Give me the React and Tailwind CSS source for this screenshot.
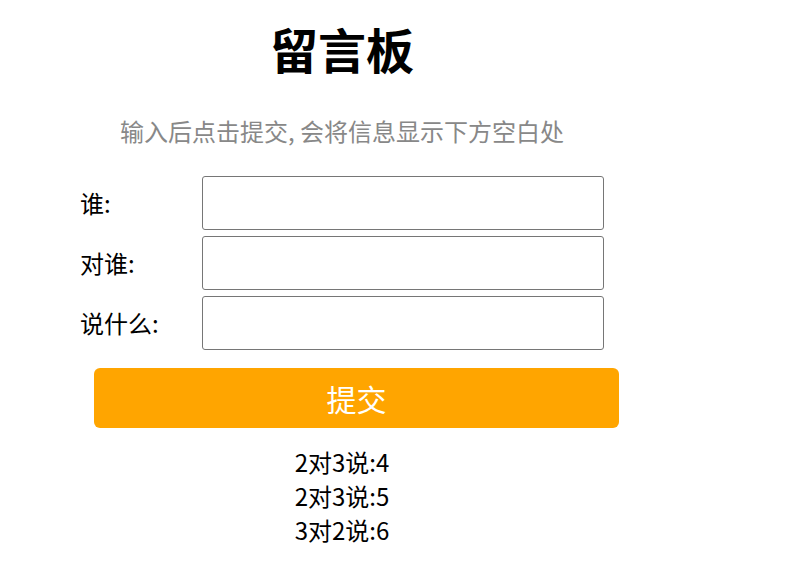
import { useState } from 'react';

const font = { fontFamily: '"Noto Sans CJK SC", "Noto Sans", sans-serif' };

export default function App() {
    const [from, setFrom] = useState('');
    const [to, setTo] = useState('');
    const [text, setText] = useState('');
    const [messages, setMessages] = useState([
        { from: '2', to: '3', text: '4' },
        { from: '2', to: '3', text: '5' },
        { from: '3', to: '2', text: '6' },
    ]);

    const handleSubmit = () => {
        if (!from || !to || !text) return;
        setMessages([...messages, { from, to, text }]);
        setFrom('');
        setTo('');
        setText('');
    };

    const fields = [
        { label: '谁:', value: from, set: setFrom },
        { label: '对谁:', value: to, set: setTo },
        { label: '说什么:', value: text, set: setText },
    ];

    return (
        <div className="min-h-[568px] bg-white text-black" style={font}>
            <div className="ml-[80px] w-[524px] pt-[16px]">
                <h1 className="text-center text-[48px] font-bold leading-[64px]">留言板</h1>
                <p className="mt-[35px] text-center text-[24px] leading-[32px] text-[#888888]">
                    输入后点击提交, 会将信息显示下方空白处
                </p>

                <div className="mt-[29px] flex flex-col gap-[6px]">
                    {fields.map((f) => (
                        <div key={f.label} className="flex items-center">
                            <label className="w-[122px] text-[24px] leading-[30px]">{f.label}</label>
                            <input
                                value={f.value}
                                onChange={(e) => f.set(e.target.value)}
                                className="h-[54px] w-[402px] rounded-[3px] border border-[#767676] px-2 text-[20px] outline-none"
                            />
                        </div>
                    ))}
                </div>

                <button
                    onClick={handleSubmit}
                    className="ml-[14px] mt-[18px] h-[60px] w-[525px] rounded-[6px] bg-[#ffa500] text-[30px] text-white"
                >
                    提交
                </button>

                <div className="mt-[17px] flex flex-col items-center">
                    {messages.map((m, i) => (
                        <div key={i} className="text-[24px] leading-[34px]">
                            {m.from}对{m.to}说:{m.text}
                        </div>
                    ))}
                </div>
            </div>
        </div>
    );
}
